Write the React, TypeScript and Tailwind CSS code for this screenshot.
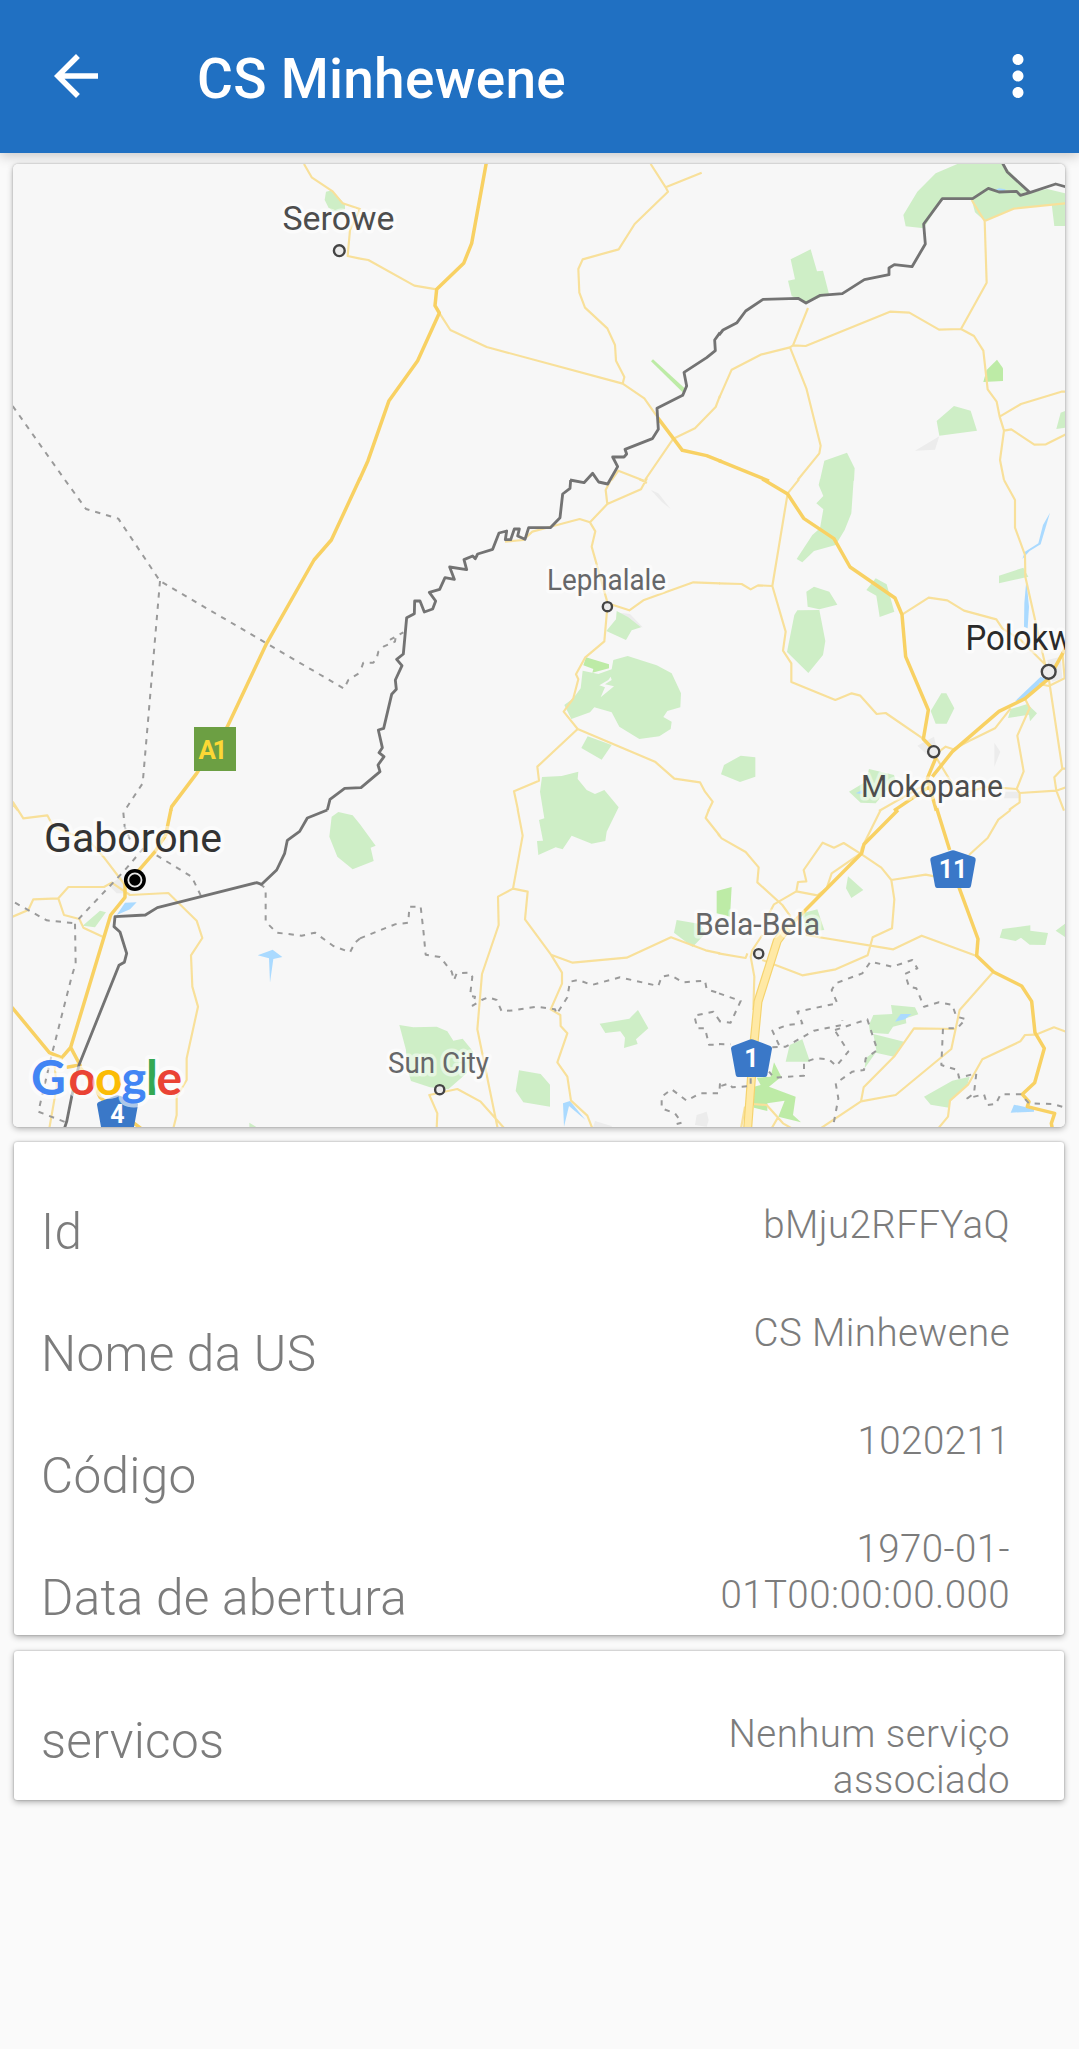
import { MdArrowBack, MdMoreVert } from "react-icons/md";

type Sector = {
  x: number;
  y: number;
  urban?: string;
  parks?: string;
  reserves?: string;
  water?: string;
  minor?: string;
  major?: string;
  dashed?: string;
  border?: string;
};

// Map geometry, split in sectors; path units are a third of a pixel.
const SECTORS: Sector[] = [
  {
    x: 0,
    y: 150,
    parks: "M978 125L990 122L1000 125L1035 163L1035 178L1000 185L985 172L974 150Z",
    minor: "M912 42L935 82L998 124L1028 160L1080 177L1050 240L1043 318L1080 326",
  },
  {
    x: 360,
    y: 150,
    reserves: "M873 634L879 628L974 715L968 727Z",
    minor:
      "M0 326L25 330L163 407L230 418M239 490L271 540L380 591L788 701L853 745L895 805M872 42L917 112L924 125L824 222L776 298L668 328L655 357L658 428L675 473L742 535L765 585L768 632L793 681L788 701M917 112L1025 68M1080 737L1067 771L1005 835L940 866L855 990M755 990L775 962L852 992",
    major:
      "M379 38L335 280L311 340L230 418L225 467L238 489L173 632L87 752L24 932L-2 990M893 803L940 865L967 901L1040 917L1085 935",
    border:
      "M1080 548L1064 570L1066 602L1040 623L972 667L980 708L968 736L891 775L895 838L877 866L795 898L800 912L792 921L758 921L773 950L743 1002L716 996L698 970L672 998L630 990",
  },
  {
    x: 719,
    y: 150,
    urban: "M588 902L661 859L648 899Z",
    parks:
      "M553 195L595 125L650 70L715 42L850 42L932 127L893 124L808 115L761 146L670 146L614 235L560 229ZM215 328L275 298L294 364L312 362L330 432L261 459L218 438L207 392L228 388ZM758 150L808 115L893 124L932 128L985 117L1038 130V160L884 176L797 213L768 187ZM998 162H1040V228H1006ZM653 813L705 768L755 782L774 842L661 857ZM1040 782L1025 788L1012 837L1040 833ZM303 990L316 932L384 908L407 955L405 992H303Z",
    reserves: "M834 629L852 655V693L793 696L803 660Z",
    water: "M828 120L840 115L860 118L855 124Z",
    minor:
      "M1040 160L884 176L797 213L758 150M797 213L803 398L726 537L660 539L571 488L513 485L260 588L222 586M213 592L125 614L38 659L0 745M267 474L222 586L213 592L262 715L305 887L301 910L236 990M726 537L765 558L793 602L806 718L833 755L842 800L855 842L843 930L855 990M842 800L906 762L1027 725H1040M855 842L877 838L946 884L981 883L1040 853",
    major: "M0 932L150 993",
    border:
      "M850 38L865 66L932 127M1042 111L1010 102L932 128L904 136L893 124L840 126L808 115L761 146L670 146L614 222L619 282L579 350L526 344L510 354L510 374L436 389L370 431L304 436L261 459L237 445L132 448L80 483L54 518L12 540L0 555",
  },
  {
    x: 0,
    y: 480,
    minor: "M38 972L54 992",
    major: "M1080 -5L994 180L942 240L800 490L682 740L590 880L515 980L512 992",
    dashed:
      "M38 -222L195 0L258 87L355 116L480 303L1032 626L1045 600L1080 578M480 303L428 910L375 990",
  },
  {
    x: 360,
    y: 480,
    urban: "M873 30L895 40L932 87L905 65ZM778 398L810 402L848 442L830 440Z",
    parks:
      "M770 393L805 412L843 442L815 451L798 480L739 453L768 418ZM760 540L803 528L890 556L935 580L963 640L961 682L922 693L910 711L935 725L932 747L898 769L838 777L778 740L755 697L703 682L690 697L634 717L613 675L640 655L662 625L668 572L715 582L755 568ZM683 769L755 795L725 839L664 804ZM546 891L605 888L655 875L653 897L680 930L705 942L733 930L776 982L740 1055L736 1083L695 1091L635 1067L608 1108L587 1102L535 1125L531 1083L549 1082L537 1020L553 1015L540 935Z",
    reserves: "M678 532L747 553V565L697 578L700 567L670 556Z",
    minor:
      "M755 -5L737 30L742 72M861 -5L843 28L742 72L690 127L659 117L580 138L517 155L490 180L435 185M838 -2L861 8M690 127L706 154L695 200L743 370L733 484L676 532L648 583L655 598L640 655L611 695L653 747L532 860L537 902L462 934L474 990M743 370L808 391L850 361L1000 307L1080 310M653 747L885 845L943 896L1020 907L1035 935L1058 965L1045 992",
    dashed: "M5 562L10 548L40 548L50 535L55 515L72 499L105 485L107 470L92 478L130 457",
    border:
      "M632 0L630 25L608 42L600 113L571 143L506 143L495 178L473 168L478 147L463 147L452 179L436 179L440 153L417 159L398 208L353 222L346 236L338 228L312 239L320 269L269 261L283 298L255 293L239 328L208 337L227 363L218 387L193 396L180 363L164 363L163 401L140 413L130 522L110 538L126 557L106 600L109 628L95 643L71 745L55 750L67 803L57 818L72 830L54 855L60 875L3 923L-46 925L-90 958L-98 990",
  },
  {
    x: 719,
    y: 480,
    urban:
      "M595 797L645 770L655 815L625 825ZM826 788L844 815L826 860ZM860 935H900V955H855ZM985 540L1025 530L1030 595L1000 605Z",
    parks:
      "M303 -2H404L397 100L377 150L350 195L285 213L250 247L233 237L280 165L303 145L313 88L292 70L313 48L299 15ZM262 335L285 320L331 335L355 374L301 388L266 380ZM235 391L301 390L319 483L312 525L268 579L204 516L226 405ZM470 295L503 313L526 395L482 411L472 347L442 330ZM840 287L913 263L928 290L840 310ZM667 640H682L706 685L683 731H650L635 693ZM875 687L925 672L954 700L933 724L930 704L867 714ZM15 855L65 827L109 832V890L63 906L6 883ZM450 867L525 885L530 900L470 970L425 968L390 935L440 905Z",
    water:
      "M993 98L965 193L932 213L910 237L918 215L958 190L972 135ZM922 300L930 380L926 445L915 440L916 370ZM965 590L985 600L918 656L888 664ZM410 940L430 930V942Z",
    minor:
      "M240 -2L206 40L160 318L200 455L192 512L217 550L217 606L349 660L398 640L424 647L473 702L500 699L612 776M0 310L68 312L95 328L117 316L160 318M855 0L888 60L888 143L918 225L919 290L980 560M549 404L629 353L685 361L735 392L832 418L850 445L905 480L980 555M1030 515L1037 595L990 618L960 612M990 600L1030 866L1006 892L1012 932L1035 992M1030 866H1040M1040 922L1012 932L902 939L893 927L800 920L720 945L650 830M893 927L914 874L895 767L932 684L918 656M902 939V967L870 990M875 685L828 745L750 783L703 808L680 800L660 815M625 910L480 993",
    major:
      "M130 -3L206 42L254 115L345 176L393 261L528 354L549 404L560 530L628 690L613 777L645 810L650 835L625 895L652 992M1042 500L990 595L918 656L840 694L700 815L640 890M628 922L525 992",
  },
  {
    x: 0,
    y: 810,
    urban: "M325 225L365 200L380 250L350 250Z",
    parks:
      "M995 20L1015 6L1058 16L1080 43L1127 107L1112 113L1121 153L1058 178L1012 140L988 80ZM300 302L318 307L285 352L248 347ZM748 938L772 953H748Z",
    water: "M375 278L410 277L390 298L350 315ZM773 436L818 419L847 441L820 447L810 518L807 445Z",
    minor:
      "M38 -25L70 25L142 16L160 50L270 95L310 140L375 225M38 320L85 300L100 268L175 265L205 231L312 231L335 218L390 255L505 249L590 332L607 384L573 436L577 530L594 590L560 745L560 810L530 860L530 915L520 955M175 265L192 315L238 327L250 353L308 380M162 750L170 830L148 955",
    major:
      "M513 -2L497 75L465 125L400 200M375 220L375 262L332 315L212 712L188 740M212 712L240 765L200 772M36 592L148 728L190 745M240 772L285 830L300 862L425 957",
    dashed:
      "M370 8L374 50L390 88M430 115L375 180L235 328L225 340L227 460L215 500L155 735L115 905L200 938M45 278L140 331L225 340M470 136L575 200L603 258M780 222L797 235L797 335L830 368L905 377L945 368L1000 408L1050 427L1065 398L1080 385",
    border:
      "M982 0L922 24L899 64L862 91L854 130L830 180L785 223L770 218L603 260L472 293L436 315L345 320L342 350L360 366L380 430L373 457L357 466L237 765L215 860L200 935L193 956",
  },
  {
    x: 360,
    y: 810,
    urban: "M705 933L755 948V955H698ZM1010 915L1040 905L1046 930L1040 950L1005 945Z",
    parks:
      "M118 645L160 652L230 650L262 664L280 692L308 686L340 725L320 790L265 838L210 832L153 813L140 770L138 720ZM477 781L542 792L570 824V890L490 877L467 843ZM950 330L1020 342L1037 370L998 411L942 368ZM719 641L808 626L834 600L865 655L828 688L833 702L792 714L795 683L781 664L736 669Z",
    water: "M609 880L630 873L676 929L627 888L612 950Z",
    minor:
      "M473 -2L488 77L459 236L414 260L416 345L366 492L352 658L413 955M459 236L503 245L495 328L573 434L606 488V521L572 598L601 615L602 648L622 670L592 757L622 800L633 872L682 917L697 955M573 434L638 458L800 443L933 382L1037 421L1080 430M230 955L232 910L208 855L292 837L362 875L433 955M1047 -2L1037 24L1080 78",
    dashed:
      "M0 385L105 343L145 338L148 290L182 290L190 360L197 434L240 441L275 485L282 510L290 490L330 488L337 500L330 558L345 560L338 587L365 570L385 562L410 570L425 604L460 601L530 590L585 598L590 612L622 562L630 515L655 510L695 525L780 502L895 528L905 500L930 495L970 517L1035 512L1040 538L1080 550M1080 634L1060 605L1003 617L1012 655L1035 655L1047 704L1080 704M1080 820L1078 850L1020 850L980 872L935 838L905 860L905 895L945 910L965 938L950 942",
  },
  {
    x: 719,
    y: 810,
    parks:
      "M387 199L433 240L397 264L381 235ZM295 298L316 360L260 365L250 310ZM850 357L934 346V362L987 369L979 405L932 404L906 383L890 393L842 383ZM1040 340L1010 362L1040 382ZM463 615L520 612L516 585L588 592L598 613L560 625L562 640L522 650L508 672L453 668L450 645ZM463 672L555 695L525 740L470 728L437 775L440 745L472 720ZM250 688L273 755L200 755L212 705ZM752 800L745 825L693 870L690 893L635 884L615 860L700 812Z",
    reserves:
      "M-7 243L38 231L33 320L-7 310ZM165 757L187 800L150 830L230 860L222 915L246 937L178 920L197 872L145 880V903L105 893V830L125 825L113 803L155 800Z",
    water: "M528 635L545 612L577 612L558 628ZM885 884L945 897V905L875 908Z",
    minor:
      "M-3 72L8 85L80 126L119 172L115 217L190 285L215 320M-2 430L80 444L85 430M485 0L428 115L425 130L338 190L323 235L295 256L232 244L165 283L140 330M130 375L100 420L95 440L106 500L103 600M232 244L237 216L262 214L254 180L311 98L345 113L374 99L428 133L487 173L517 210L526 268L519 355L461 382L446 436L350 478L250 496L130 450M517 210L620 194L650 200M750 135L806 84L838 29L875 0M260 375L523 418L608 377L773 438M822 487L722 600L697 717L530 855L426 874L434 832L527 738L585 655L708 657M426 874L305 955M1040 665L1005 652L950 674L918 675L904 694L790 748L748 823L693 872L687 920L658 955M100 882L143 885L192 940L218 955M178 920L158 955M66 955L78 890",
    major:
      "M653 -5L692 120M720 232L777 387L773 437L824 486L908 528L938 574L948 668L976 715L947 818L910 853L930 875L925 890L1007 910L997 940L1000 956M537 0L435 103L428 130L215 345",
    dashed:
      "M0 550L65 573L35 638L0 634M0 702L35 703M160 712L200 710L285 662L370 645L370 630M348 660L445 628L475 720L440 745L435 780L400 785L350 820L358 865L344 940M180 705L160 662L205 645L250 640L235 605L355 580L338 540L350 520L430 490L455 455L520 470L580 450L595 475L558 492L570 530L592 535L615 590L660 577L700 585L712 620L740 627L715 655L672 655L667 765L715 780L720 803L772 790L765 850L745 865L795 853L805 885L830 882L845 853L905 853L930 880L1000 882L1040 893M350 665L388 725L352 768L330 748L290 745L255 757V797L165 803L150 785M95 805V828L40 832L30 820L0 830",
  },
];

type LayerKey = "urban" | "parks" | "reserves" | "water" | "minor" | "major" | "dashed" | "border";

function Layer({ name, className, dash }: { name: LayerKey; className: string; dash?: string }) {
  return (
    <g className={className} strokeDasharray={dash} strokeLinejoin="round">
      {SECTORS.map((s) =>
        s[name] ? (
          <path key={`${s.x}-${s.y}`} d={s[name]} transform={`translate(${s.x} ${s.y}) scale(0.33333)`} />
        ) : null,
      )}
    </g>
  );
}

type Place = {
  name: string;
  x: number;
  y: number;
  size: number;
  width?: number;
  tone: string;
  dot: [number, number, number];
};

const PLACES: Place[] = [
  { name: "Serowe", x: 282.5, y: 230, size: 34, width: 112, tone: "fill-[#4d4d4d]", dot: [339.3, 250.7, 5.4] },
  { name: "Lephalale", x: 547, y: 590, size: 29.5, width: 119, tone: "fill-[#666769]", dot: [607.4, 606.7, 4.6] },
  { name: "Polokwane", x: 965.5, y: 650, size: 34.5, width: 161, tone: "fill-[#2b2b2b]", dot: [1048.7, 671.8, 6.9] },
  { name: "Mokopane", x: 861, y: 797, size: 32, width: 142, tone: "fill-[#4d4d4d]", dot: [933.7, 751.7, 5.6] },
  { name: "Bela-Bela", x: 695, y: 935, size: 31, width: 125, tone: "fill-[#666769]", dot: [758.7, 953.7, 4.6] },
  { name: "Sun City", x: 388, y: 1073, size: 29, width: 101, tone: "fill-[#666769]", dot: [439.7, 1089.7, 4.6] },
];

const GOOGLE: [string, number, string][] = [
  ["G", 31, "fill-[#4285f4]"],
  ["o", 68.5, "fill-[#ea4335]"],
  ["o", 95, "fill-[#fbbc05]"],
  ["g", 121.5, "fill-[#4285f4]"],
  ["l", 146, "fill-[#34a853]"],
  ["e", 156.5, "fill-[#ea4335]"],
];

function Shield({ x, y, w, label }: { x: number; y: number; w: number; label: string }) {
  const h = w / 2;
  return (
    <g transform={`translate(${x} ${y})`}>
      <path
        className="fill-[#3a78c8]"
        d={`M-3 1Q0 -0.6 3 1L${h - 2} 7Q${h} 8 ${h - 0.3} 10L${h - 5} 36Q${h - 5.5} 38 ${h - 7} 38H${7 - h}Q${5.5 - h} 38 ${5 - h} 36L${0.3 - h} 10Q${-h} 8 ${2 - h} 7Z`}
      />
      <text y="28" textAnchor="middle" className="fill-white text-[25px] font-bold">
        {label}
      </text>
    </g>
  );
}

function MapView() {
  return (
    <svg
      viewBox="13 164 1052 963"
      className="block h-[963px] w-full font-[Roboto,sans-serif]"
      role="img"
    >
      <rect x="13" y="164" width="1052" height="963" className="fill-[#f7f7f7]" />
      <Layer name="urban" className="fill-[#ececec]" />
      <Layer name="parks" className="fill-[#ceeec6]" />
      <Layer name="reserves" className="fill-[#bdeba6]" />
      <path
        className="fill-[#f7f7f7]"
        d="M752 590L745 600L718 616L735 622L722 652L762 619L735 613L755 600Z"
        transform="translate(360 480) scale(0.33333)"
      />
      <Layer name="water" className="fill-[#aadaff]" />
      <Layer name="minor" className="fill-none stroke-[#f8e09a] stroke-[6.5px]" />
      <Layer name="major" className="fill-none stroke-[#f8d163] stroke-[10.5px]" />
      <g
        className="fill-none"
        strokeLinejoin="round"
        transform="translate(719 810) scale(0.33333)"
      >
        <path className="stroke-[#f5d36e] stroke-[27px]" d="M205 352L175 392L117 575L105 700L86 956" />
        <path className="stroke-[#ffe9a5] stroke-[20px]" d="M205 352L175 392L117 575L105 700L86 956" />
      </g>
      <Layer name="dashed" className="fill-none stroke-[#9a9a9a] stroke-[6px]" dash="16 18" />
      <Layer name="border" className="fill-none stroke-[#737373] stroke-[8.5px]" />

      <rect x="194" y="727" width="42" height="44" className="fill-[#6c9f43]" />
      <text x="198.5" y="759" textLength="29" className="fill-[#fdd835] text-[26px] font-bold">
        A1
      </text>
      <Shield x={953} y={850} w={46} label="11" />
      <Shield x={751.5} y={1039} w={41.5} label="1" />
      <Shield x={117.5} y={1095} w={41.5} label="4" />

      {PLACES.map((p) => (
        <g key={p.name}>
          <text
            x={p.x}
            y={p.y}
            fontSize={p.size}
            textLength={p.width}
            lengthAdjust="spacingAndGlyphs"
            className={p.tone}
            stroke="rgba(255,255,255,0.5)"
            strokeWidth="7"
            strokeLinejoin="round"
            paintOrder="stroke"
          >
            {p.name}
          </text>
          <circle
            cx={p.dot[0]}
            cy={p.dot[1]}
            r={p.dot[2]}
            strokeWidth="2.4"
            className="fill-[#ececec] stroke-[#444444]"
          />
        </g>
      ))}

      <text
        x="44"
        y="852"
        fontSize="41"
        textLength="178"
        lengthAdjust="spacingAndGlyphs"
        className="fill-[#333333]"
        stroke="rgba(255,255,255,0.5)"
        strokeWidth="8"
        strokeLinejoin="round"
        paintOrder="stroke"
      >
        Gaborone
      </text>
      <circle cx="134.9" cy="880" r="11" className="fill-black" />
      <circle cx="134.9" cy="880" r="6.6" className="fill-black stroke-[#e8e8e8] stroke-[1.8px]" />

      <text
        y="1094.5"
        className="font-[Lato,sans-serif] text-[48px] font-bold"
        stroke="rgba(255,255,255,0.6)"
        strokeWidth="8"
        strokeLinejoin="round"
        paintOrder="stroke"
      >
        {GOOGLE.map(([letter, x, tone]) => (
          <tspan key={x} x={x} className={tone}>
            {letter}
          </tspan>
        ))}
      </text>
    </svg>
  );
}

const CARD = "flex justify-between rounded-[3px] bg-white shadow-[0_2px_6px_rgba(0,0,0,0.32),0_0_2px_rgba(0,0,0,0.3)]";

function Details({ labels, values, className }: { labels: string[]; values: string[]; className: string }) {
  return (
    <section className={`${CARD} ${className}`}>
      <div className="flex flex-col gap-[62px] pt-[60px] pl-[27px] text-[49.5px] leading-[60px] tracking-[0.28px]">
        {labels.map((label) => (
          <div key={label}>{label}</div>
        ))}
      </div>
      <div className="flex w-[360px] flex-col gap-[62px] pt-[60px] pr-[54px] text-right text-[38.5px] leading-[46px] tracking-[0.42px]">
        {values.map((value) => (
          <div key={value} className="whitespace-pre-line">
            {value}
          </div>
        ))}
      </div>
    </section>
  );
}

export default function App() {
  return (
    <div className="flex h-[2049px] w-[1079px] flex-col overflow-hidden bg-[#fafafa] font-[Roboto,sans-serif]">
      <header className="flex h-[153px] shrink-0 items-start bg-[#2070c2] pt-[43px] pr-[28px] pl-[43px] text-white shadow-[0_3px_12px_rgba(0,0,0,0.2)]">
        <MdArrowBack className="size-[66px]" />
        <h1 className="ml-[88px] flex-1 pt-[3px] text-[55px] leading-[66px] font-medium tracking-[0.25px] whitespace-nowrap">
          CS Minhewene
        </h1>
        <MdMoreVert className="size-[66px]" />
      </header>
      <main className="flex flex-col pt-[11px] pr-[15px] pl-[14px] font-light text-[#7c7c7c]">
        <section className="-mx-px overflow-hidden rounded-[5px] font-normal shadow-[0_2px_6px_rgba(0,0,0,0.28),0_0_2px_rgba(0,0,0,0.25)]">
          <MapView />
        </section>
        <Details
          className="mt-[15px] h-[493px]"
          labels={["Id", "Nome da US", "Código", "Data de abertura"]}
          values={["bMju2RFFYaQ", "CS Minhewene", "1020211", "1970-01-\n01T00:00:00.000"]}
        />
        <Details
          className="mt-[16px] h-[149px]"
          labels={["servicos"]}
          values={["Nenhum serviço\nassociado"]}
        />
      </main>
    </div>
  );
}
